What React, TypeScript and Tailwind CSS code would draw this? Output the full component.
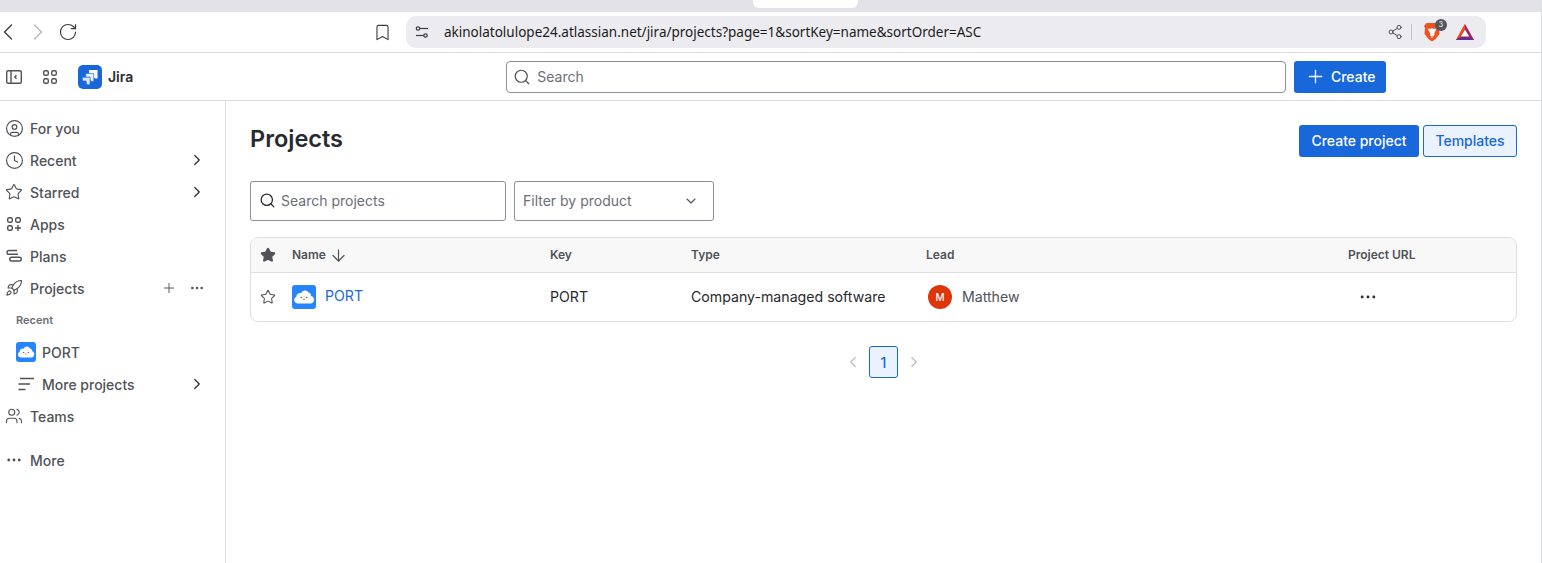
import React from 'react';
import { ChevronLeft, ChevronRight, ChevronDown, RotateCw, Bookmark, Share2, Search, Plus, Ellipsis, CircleUser, Clock, Star, Rocket, ArrowDown, Users } from 'lucide-react';

function JiraLogo() {
    return (
        <div className="w-6 h-6 rounded-[5px] bg-[#1868db] flex items-center justify-center">
            <svg width="18" height="18" viewBox="0 0 18 18" fill="white">
                <path d="M8 2h8.500v8.500h-1.800a2 2 0 0 1-2-2V5.800H8z" />
                <path d="M4.800 5.500h8v8H11a2 2 0 0 1-2-2V9.300H4.800z" fillOpacity="0.9" stroke="#1868db" strokeWidth="0.600" />
                <path d="M1.500 9.200h7.500v7.500H7.200a2 2 0 0 1-2-2V13H1.500z" fillOpacity="0.85" stroke="#1868db" strokeWidth="0.600" />
            </svg>
        </div>
    );
}

function CloudIcon({ size }: { size: number }) {
    return (
        <div className="rounded-[3px] bg-[#2684ff] flex items-center justify-center shrink-0" style={{ width: size, height: size }}>
            <svg width={size} height={size} viewBox="1 1 22 22">
                <path d="M6.200 18a3.300 3.300 0 0 1-1.200-6.300 3.300 3.300 0 0 1 4.300-3.300 4 4 0 0 1 7-.6 3.200 3.200 0 0 1 2.300 3.200 3.600 3.600 0 0 1-.6 7z" fill="white" />
                <circle cx="9.500" cy="12.500" r="0.700" fill="#44546f" />
                <circle cx="14.500" cy="12.500" r="0.700" fill="#44546f" />
                <path d="M11 13.800h2a1 1 0 0 1-2 0z" fill="#e5484d" />
            </svg>
        </div>
    );
}

function AppsGrid() {
    return (
        <svg width="16" height="16" viewBox="0 0 16 16" fill="none" stroke="#505258" strokeWidth="1.4">
            <rect x="1.700" y="1.700" width="4.600" height="4.600" rx="1.600" />
            <rect x="9.700" y="1.700" width="4.600" height="4.600" rx="1.600" />
            <rect x="1.700" y="9.700" width="4.600" height="4.600" rx="1.600" />
            <rect x="9.700" y="9.700" width="4.600" height="4.600" rx="1.600" />
        </svg>
    );
}

function AppsPlus() {
    return (
        <svg width="16" height="16" viewBox="0 0 16 16" fill="none" stroke="#505258" strokeWidth="1.4">
            <rect x="1.700" y="1.700" width="4.600" height="4.600" rx="1.600" />
            <rect x="9.700" y="1.700" width="4.600" height="4.600" rx="1.600" />
            <rect x="1.700" y="9.700" width="4.600" height="4.600" rx="1.600" />
            <path d="M12 9v6M9 12h6" />
        </svg>
    );
}

function PlansIcon() {
    return (
        <svg width="16" height="16" viewBox="0 0 16 16" fill="none" stroke="#505258" strokeWidth="1.4">
            <path d="M12 6.300H3a1.900 1.900 0 0 1 0-3.800h8" />
            <rect x="3.700" y="9.200" width="11.600" height="3.800" rx="1.900" />
        </svg>
    );
}

function PanelIcon() {
    return (
        <svg width="16" height="16" viewBox="0 0 16 16" fill="none" stroke="#505258" strokeWidth="1.4">
            <rect x="0.700" y="1.700" width="14.600" height="12.600" rx="1.500" />
            <path d="M5 2v12" />
            <path d="M10.500 6.200 8.800 8l1.700 1.800" />
        </svg>
    );
}

function SiteSettingsIcon() {
    return (
        <svg width="14" height="14" viewBox="0 0 14 14" fill="none" stroke="#3c3c43" strokeWidth="1.200">
            <circle cx="3" cy="3.500" r="1.700" />
            <path d="M4.700 3.500H13" />
            <circle cx="10.500" cy="10.500" r="1.700" />
            <path d="M1 10.500h7.800" />
        </svg>
    );
}

function LinesIcon() {
    return (
        <svg width="16" height="14" viewBox="0 0 16 14" fill="none" stroke="#505258" strokeWidth="1.300">
            <path d="M2 1.500h14M.500 7h11.500M.500 12.500h7" />
        </svg>
    );
}

function BraveIcon() {
    return (
        <svg width="18" height="20" viewBox="0 0 18 20">
            <path d="M3.500 1h11l2.500 3-1 2 .5 6-4 5-3.500 2.500L5.500 17l-4-5 .5-6-1-2z" fill="#f1501f" />
            <path d="M4.500 6.500l3 .5L9 6l1.500 1 3-.5-2 4.500-.5 3H7.500l-.5-3z" fill="white" />
            <path d="M7.500 14.500h3L9 16z" fill="white" />
        </svg>
    );
}

function BatIcon() {
    return (
        <svg width="20" height="18" viewBox="0 0 20 18">
            <path d="M10 1 1 17h18z" fill="#9e1f63" />
            <path d="M10 1 1 17l3.500-2.300L10 5.500z" fill="#ff5000" />
            <path d="M10 6.500 5.800 13.500h8.400z" fill="white" />
            <path d="M1 17h18l-3-2.500H4z" fill="#662d91" />
        </svg>
    );
}

function NavRow({ icon, label, chevron }: { icon: React.ReactNode; label: string; chevron?: boolean }) {
    return (
        <div className="h-8 flex items-center pl-[6px] pr-5">
            <span className="w-4 flex justify-center">{icon}</span>
            <span className="ml-2 text-[14px] font-medium text-[#505258]">{label}</span>
            {chevron && <ChevronRight size={18} strokeWidth={1.6} color="#292a2e" className="ml-auto -mr-[1px]" />}
        </div>
    );
}

export default function App() {
    const nav = "#505258";

    return (
        <div className="h-[563px] overflow-hidden bg-white flex flex-col font-['Inter',sans-serif] border-r border-[#dddee1]">
            {/* browser chrome */}
            <div className="h-3 bg-[#e3e2e8] pl-[753px] shrink-0">
                <div className="w-[105px] h-2 bg-white rounded-b-md" />
            </div>
            <div className="h-[41px] flex items-center border-b border-[#dddee1] shrink-0">
                <ChevronLeft size={28} strokeWidth={1.2} color="#3c3c43" className="-ml-[6px]" />
                <ChevronRight size={28} strokeWidth={1.2} color="#b9b9be" className="ml-[2px]" />
                <RotateCw size={20} strokeWidth={1.4} color="#3c3c43" className="ml-[6px]" />
                <Bookmark size={19} strokeWidth={1.4} color="#3c3c43" className="ml-[295px]" />
                <div className="ml-[14px] w-[1080px] h-8 rounded-[10px] bg-[#ecebf0] flex items-center pl-[9px] pr-[11px]">
                    <SiteSettingsIcon />
                    <span className="ml-[15px] text-[13.500px] text-[#1c1c20] font-['Noto_Sans',sans-serif]">akinolatolulope24.atlassian.net/jira/projects?page=1&amp;sortKey=name&amp;sortOrder=ASC</span>
                    <div className="ml-auto flex items-center">
                        <Share2 size={16} strokeWidth={1.3} color="#3c3c43" />
                        <div className="w-px h-4 bg-[#c4c4c9] ml-[8px]" />
                        <div className="relative ml-[11px] flex">
                            <BraveIcon />
                            <span className="absolute -top-[3px] -right-[6px] w-3 h-3 rounded-full bg-[#55555c] text-white text-[7px] flex items-center justify-center">3</span>
                        </div>
                        <div className="ml-[14px] flex"><BatIcon /></div>
                    </div>
                </div>
            </div>

            {/* jira top bar */}
            <div className="h-12 flex items-center border-b border-[#dddee1] shrink-0">
                <div className="ml-[6px] flex"><PanelIcon /></div>
                <div className="ml-5 flex"><AppsGrid /></div>
                <div className="ml-[20px]"><JiraLogo /></div>
                <span className="ml-[6px] text-[14px] font-semibold text-[#292a2e]">Jira</span>
                <div className="ml-[373px] w-[780px] h-8 rounded-[4px] border border-[#8c8f97] flex items-center px-[6px]">
                    <Search size={18} strokeWidth={1.6} color="#505258" />
                    <span className="ml-[6px] text-[14px] text-[#6b6e76]">Search</span>
                </div>
                <div className="ml-2 w-[92px] h-8 rounded-[3px] bg-[#1868db] flex items-center justify-center gap-[5px] text-white text-[14px] font-medium">
                    <Plus size={21} strokeWidth={1.5} />
                    Create
                </div>
            </div>

            <div className="flex flex-1 min-h-0">
                {/* sidebar */}
                <nav className="w-[226px] border-r border-[#dddee1] pt-[11px] shrink-0">
                    <NavRow icon={<CircleUser size={19} strokeWidth={1.5} color={nav} className="shrink-0" />} label="For you" />
                    <NavRow icon={<Clock size={19} strokeWidth={1.5} color={nav} className="shrink-0" />} label="Recent" chevron />
                    <NavRow icon={<Star size={18} strokeWidth={1.5} color={nav} className="shrink-0" />} label="Starred" chevron />
                    <NavRow icon={<AppsPlus />} label="Apps" />
                    <NavRow icon={<PlansIcon />} label="Plans" />
                    <div className="h-8 flex items-center pl-[6px] pr-[20px]">
                        <span className="w-4 flex justify-center"><Rocket size={18} strokeWidth={1.5} color={nav} className="shrink-0" /></span>
                        <span className="ml-2 text-[14px] font-medium text-[#505258]">Projects</span>
                        <Plus size={16} strokeWidth={1.4} color={nav} className="ml-auto" />
                        <Ellipsis size={16} strokeWidth={1.8} color={nav} className="ml-[12px]" />
                    </div>
                    <div className="h-8 flex items-center pl-4 pt-[1px] text-[11px] font-semibold text-[#6b6e76]">Recent</div>
                    <div className="h-8 flex items-center pl-4">
                        <CloudIcon size={20} />
                        <span className="ml-[6px] text-[14px] font-medium text-[#505258]">PORT</span>
                    </div>
                    <div className="h-8 flex items-center pl-[18px] pr-5">
                        <LinesIcon />
                        <span className="ml-[8px] text-[14px] font-medium text-[#505258]">More projects</span>
                        <ChevronRight size={18} strokeWidth={1.6} color="#292a2e" className="ml-auto -mr-[1px]" />
                    </div>
                    <NavRow icon={<Users size={18} strokeWidth={1.5} color={nav} className="shrink-0" />} label="Teams" />
                    <div className="mt-3">
                        <NavRow icon={<Ellipsis size={18} strokeWidth={1.8} color={nav} className="shrink-0" />} label="More" />
                    </div>
                </nav>

                {/* main */}
                <main className="flex-1 pl-6 pr-6 min-w-0">
                    <div className="flex items-start justify-between pt-[24px]">
                        <h1 className="text-[23.500px] leading-7 font-semibold text-[#292a2e]">Projects</h1>
                        <div className="flex gap-1 items-center">
                            <div className="h-8 w-[120px] pb-[2px] rounded-[3px] bg-[#1868db] flex items-center justify-center text-[14px] font-medium text-white">Create project</div>
                            <div className="h-8 w-[94px] pb-[2px] rounded-[3px] bg-[#e9f2fe] border border-[#1868db] flex items-center justify-center text-[14px] font-medium text-[#1868db]">Templates</div>
                        </div>
                    </div>

                    <div className="flex gap-2 mt-[24px]">
                        <div className="w-[256px] h-10 pb-[1px] rounded-[3px] border border-[#8c8f97] flex items-center px-2">
                            <Search size={17} strokeWidth={1.8} color="#292a2e" />
                            <span className="ml-[5px] text-[14px] text-[#6b6e76]">Search projects</span>
                        </div>
                        <div className="w-[200px] h-10 pb-[1px] rounded-[3px] border border-[#8c8f97] flex items-center pl-2 pr-[15px]">
                            <span className="text-[14px] text-[#6b6e76]">Filter by product</span>
                            <ChevronDown size={16} strokeWidth={1.6} color="#505258" className="ml-auto -mr-[1px]" />
                        </div>
                    </div>

                    <div className="mt-4 rounded-lg border border-[#dddee1] overflow-hidden">
                        <div className="h-[35px] bg-[#f8f8f8] border-b border-[#dddee1] grid grid-cols-[41px_258px_141px_235px_422px_1fr] items-center text-[12px] font-semibold text-[#505258]">
                            <span className="pl-[9px]"><Star size={16} fill="#505258" color="#505258" /></span>
                            <span className="flex items-center gap-[3px]">Name <ArrowDown size={19} strokeWidth={1.5} /></span>
                            <span>Key</span>
                            <span>Type</span>
                            <span>Lead</span>
                            <span>Project URL</span>
                        </div>
                        <div className="h-12 grid grid-cols-[41px_258px_141px_235px_422px_1fr] items-center text-[14.150px] text-[#292a2e]">
                            <span className="pl-[9px]"><Star size={16} strokeWidth={1.6} color="#505258" /></span>
                            <span className="flex items-center gap-[9px]">
                                <CloudIcon size={24} />
                                <span className="text-[#1868db] -mt-[3px]">PORT</span>
                            </span>
                            <span>PORT</span>
                            <span className="-mt-[1px]">Company-managed software</span>
                            <span className="flex items-center pl-[2px]">
                                <span className="w-6 h-6 rounded-full bg-[#de350b] text-white text-[10px] font-medium flex items-center justify-center">M</span>
                                <span className="ml-[10px] text-[#505258]">Matthew</span>
                            </span>
                            <span className="pl-[10px]"><Ellipsis size={20} strokeWidth={1.5} color="#292a2e" /></span>
                        </div>
                    </div>

                    <div className="flex items-center justify-center mt-6 gap-[7px]">
                        <ChevronLeft size={18} strokeWidth={1.5} color="#b7b9be" />
                        <div className="w-[29px] h-8 rounded-[3px] bg-[#e9f2fe] border border-[#1868db] flex items-center justify-center text-[14px] font-medium text-[#1868db]">1</div>
                        <ChevronRight size={18} strokeWidth={1.5} color="#b7b9be" />
                    </div>
                </main>
            </div>
        </div>
    );
}
